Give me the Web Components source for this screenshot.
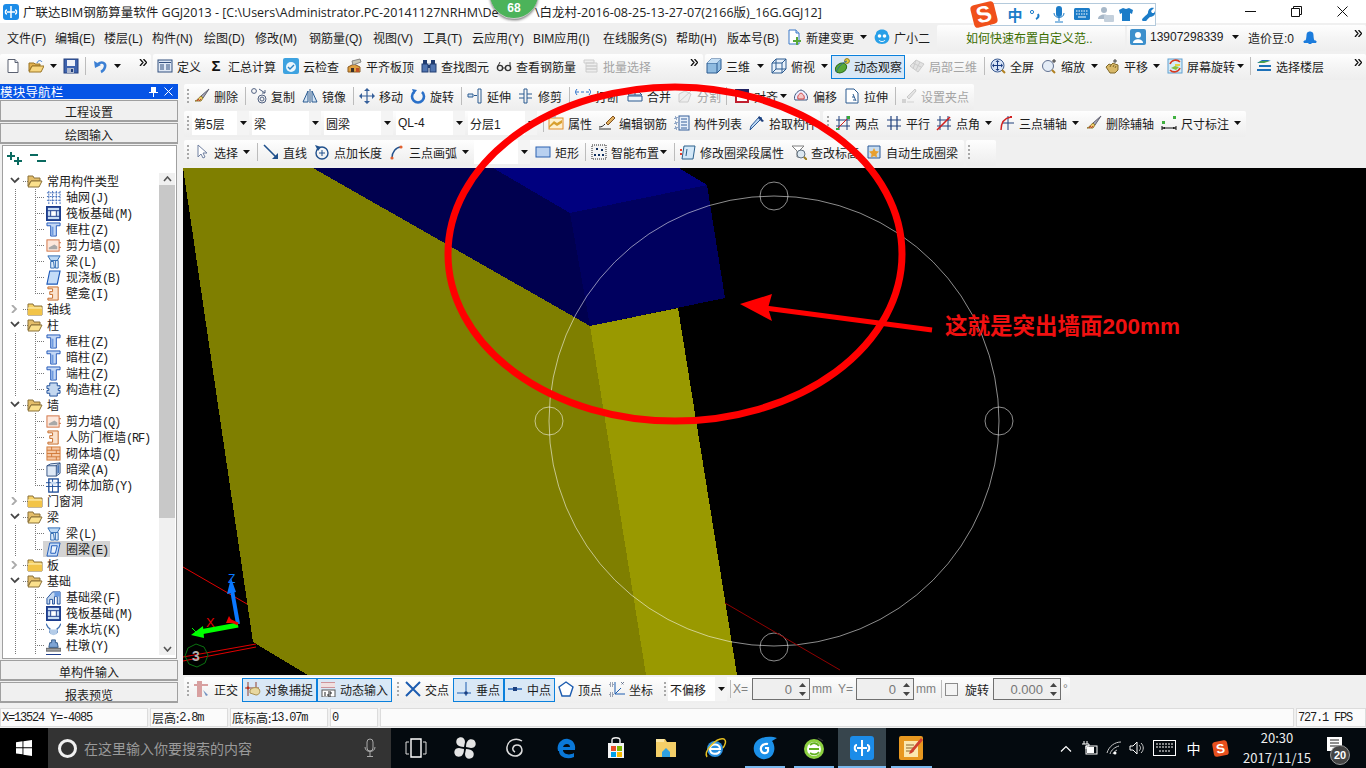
<!DOCTYPE html>
<html>
<head>
<meta charset="utf-8">
<title>GGJ2013</title>
<style>
    html, body { margin: 0; padding: 0; width: 1366px; height: 768px; overflow: hidden; background: #f0f0f0; }
    body { display: flex; flex-direction: column; position: relative; font: 12px "Liberation Sans", "Noto Sans CJK SC", sans-serif; color: #1c1c1c; }
</style>
</head>
<body>
<win-title><span class="a">广联达BIM钢筋算量软件 GGJ2013 - [C:\Users\Administrator.PC-20141127NRHM\De</span><span>\白龙村-2016-08-25-13-27-07(2166版)_16G.GGJ12]</span></win-title>
<tool-row id="menu" h="31" pt="2"></tool-row>
<tool-row id="r1" h="30"></tool-row>
<work-area>
    <nav-panel slot="left">
        <nav-button>工程设置</nav-button>
        <nav-button style="margin-top:1px;height:21px;padding-top:2px">绘图输入</nav-button>
        <nav-tree id="tree"></nav-tree>
        <nav-button style="margin-top:1px;height:21px;padding-top:3px">单构件输入</nav-button>
        <nav-button style="margin-top:1px;height:21px;padding-top:4px">报表预览</nav-button>
    </nav-panel>
    <tool-row id="r2" h="27"></tool-row>
    <tool-row id="r3" h="29"></tool-row>
    <tool-row id="r4" h="28"></tool-row>
    <cad-view></cad-view>
    <tool-row id="r5" h="32" pt="2"></tool-row>
</work-area>
<status-bar>
    <status-cell w="148" mono>X=13524 Y=-4085</status-cell>
    <status-cell w="78" mono><span class="c">层高:</span>2.8m</status-cell>
    <status-cell w="98" mono><span class="c">底标高:</span>13.07m</status-cell>
    <status-cell w="48" mono>0</status-cell>
    <status-cell w="914"></status-cell>
    <status-cell w="70" mono>727.1 FPS</status-cell>
</status-bar>
<task-bar></task-bar>
<markup-layer></markup-layer>
<update-badge>68</update-badge>
<ime-bar></ime-bar>

<script>
// small icon set, all drawn on a 16x16 box
const col = '<path d="M1 1h14v3h-4v11H5V4H1z" fill="#c4d8f5" stroke="#2055b8"/><path d="M6 5h2v9H6z" fill="#6f9be0"/>';
const ICONS = {
    new: '<path d="M3 1.5h7l3 3v10H3z" fill="#fff" stroke="#5a6070"/><path d="M10 1.5v3h3" fill="#d8deea" stroke="#5a6070"/>',
    open: '<path d="M1 13V5h5l1 1h5v2H4z" fill="#e0b050" stroke="#9a7424"/><path d="M1 14l3-6h12l-3 6z" fill="#f7d680" stroke="#9a7424"/><path d="M9 5c1-3 4-3 5-1" fill="none" stroke="#3a78c8"/>',
    save: '<rect x="1" y="1" width="14" height="14" fill="#3d62ad" stroke="#233f7c"/><rect x="4" y="2" width="8" height="6" fill="#eef1f8"/><rect x="4" y="10" width="7" height="5" fill="#aeb9cf"/><rect x="8" y="11" width="2" height="3" fill="#233f7c"/>',
    undo: '<path d="M5 6c4-3 8-1 7 3c-.5 2-2 4-4 5" fill="none" stroke="#3c80d4" stroke-width="2.6"/><path d="M1 3l1 7 6-3z" fill="#3c80d4"/>',
    def: '<rect x="1" y="2" width="14" height="12" fill="#dfe8f5" stroke="#33507f"/><rect x="2" y="4" width="12" height="1" fill="#33507f"/><path d="M3 7h4M3 9h4M3 11h4M9 7h4M9 9h4M9 11h4" stroke="#33507f"/>',
    sigma: '<text x="8" y="13" text-anchor="middle" font-size="15" font-weight="700" font-family="Liberation Sans" fill="#111">Σ</text>',
    cloud: '<rect x="0" y="0" width="16" height="16" rx="2" fill="#3da2e0"/><circle cx="8" cy="9" r="5" fill="#eaf6fd"/><path d="M5 9l2 2 4-4" fill="none" stroke="#2c84c4" stroke-width="1.4"/>',
    flat: '<path d="M2 14V9l6-3 6 3v5z" fill="#e0a040" stroke="#8a5a20"/><path d="M6 3l8-2 1 3-8 3z" fill="#c8c8b8" stroke="#888"/><rect x="5" y="10" width="3" height="4" fill="#38302a"/><rect x="10" y="10" width="3" height="4" fill="#c05028"/>',
    binoc: '<rect x="2" y="2" width="4" height="4" fill="#203c70"/><rect x="10" y="2" width="4" height="4" fill="#203c70"/><rect x="1" y="6" width="6" height="8" fill="#5074b0" stroke="#203c70"/><rect x="9" y="6" width="6" height="8" fill="#5074b0" stroke="#203c70"/><rect x="7" y="7" width="2" height="3" fill="#203c70"/>',
    glass: '<circle cx="4" cy="10" r="2.6" fill="none" stroke="#333" stroke-width="1.4"/><circle cx="12" cy="10" r="2.6" fill="none" stroke="#333" stroke-width="1.4"/><path d="M2 8l2-4M14 8V4M7 10h2" stroke="#333"/>',
    batch: '<path d="M1 2h10v3H1zM3 5h11v3H3zM3 8h11v3H3zM3 11h11v3H3z" fill="#ececec" stroke="#c0c0c0"/>',
    cube: '<path d="M1 5l4-4h10v10l-4 4H1z" fill="#8fbbe0" stroke="#2a5a90"/><path d="M1 5h10v10M11 5l4-4" fill="none" stroke="#2a5a90"/><path d="M1 5l4-4h10l-4 4z" fill="#c4def4"/>',
    wire: '<path d="M1 5l4-4h10v10l-4 4H1z" fill="#eaf2fa" stroke="#2a5a90"/><path d="M1 5h10v10M11 5l4-4M5 1v10l-4 4M5 11h10" fill="none" stroke="#2a5a90"/>',
    orbit: '<ellipse cx="7" cy="10" rx="6" ry="4.5" transform="rotate(-30 7 10)" fill="#58a838" stroke="#2c6a18"/><circle cx="13" cy="3" r="2.4" fill="#e8d040" stroke="#907818"/><path d="M2 14C6 6 10 4 13 3" stroke="#2a6a9a" fill="none"/>',
    local: '<path d="M1 8l6-6 8 4-6 8z" fill="#dcdcdc" stroke="#bdbdbd"/><path d="M4 5l8 4M7 2l-3 9M11 4l-4 8" stroke="#bdbdbd" fill="none"/>',
    full: '<circle cx="7.5" cy="7.5" r="6.5" fill="#d8e4f6" stroke="#3a5a90"/><path d="M7.5 3v9M3 7.5h9" stroke="#1c3c80"/><path d="M7.5 2l-2 2h4zM7.5 13l-2-2h4zM2 7.5l2-2v4zM13 7.5l-2-2v4z" fill="#1c3c80"/><path d="M12 12l3 3" stroke="#b08020" stroke-width="2"/>',
    zoom: '<circle cx="7" cy="8" r="5.5" fill="#e4ecf6" stroke="#607090"/><path d="M11 12l3 3" stroke="#b08020" stroke-width="2"/><path d="M13 1v4M11 3h4" stroke="#333"/>',
    pan: '<path d="M2 9l3-3 2 1 2-2 2 1 3 1v5l-3 3H6z" fill="#d8b868" stroke="#806828"/><path d="M6 9l1-2M9 9l1-2M11 10l1-2" stroke="#806828"/><path d="M11 1v4M9 3h4" stroke="#444"/>',
    turn: '<rect x="1" y="1" width="14" height="14" fill="#d4ecf8" stroke="#60a0d0"/><path d="M3 6a6 6 0 0 1 10-2" fill="none" stroke="#d83a20" stroke-width="1.6"/><path d="M13 10a6 6 0 0 1-10 2" fill="none" stroke="#d83a20" stroke-width="1.6"/><path d="M4 10l4-2 4 1-3 3z" fill="#88c040"/><path d="M8 6h5v2H8z" fill="#e8d040"/>',
    floors: '<path d="M6 2l9 0-9 3H1zM3 7h12v2H3zM1 11h14v2H1z" fill="#1c70b8"/><path d="M5 3h9L8 5H2z" fill="#48a050"/>',
    brush: '<path d="M15 1L7 8l2 2z" fill="#a8a8b8" stroke="#606070"/><path d="M7 8l2 2-2 3H1c3-1 3-3 6-5z" fill="#e8c868" stroke="#907830"/><path d="M3 13l2-2M5 13l2-2" stroke="#c84030"/>',
    copy: '<circle cx="3" cy="3" r="2.4" fill="none" stroke="#506080"/><circle cx="11" cy="11" r="4" fill="none" stroke="#506080"/><circle cx="11" cy="11" r="2" fill="none" stroke="#506080"/><path d="M8 1l6 4M14 2v3h-3" fill="none" stroke="#506080"/>',
    mirror: '<path d="M8 1v14" stroke="#2a5a90"/><path d="M6 3v11H1zM10 3v11h5z" fill="#d4e4f4" stroke="#2a5a90"/>',
    move: '<path d="M8 1v14M1 8h14" stroke="#355f9a" stroke-width="1.2"/><path d="M8 0l-3 3h6zM8 16l-3-3h6zM0 8l3-3v6zM16 8l-3-3v6z" fill="#355f9a"/>',
    rot: '<path d="M4 4a6 6 0 1 0 8 0" fill="none" stroke="#2a70c8" stroke-width="2.6"/><path d="M2 1l5 1-3 4z" fill="#2a70c8"/>',
    ext: '<path d="M14 1v14M11 1v14M11 1h3M11 15h3" stroke="#2a5a90" fill="none"/><path d="M1 6h5v3H1zM7 7.5h3" fill="#d4e4f4" stroke="#2a5a90"/>',
    trim: '<path d="M6 1v14M9 1v14M6 1h3M6 15h3" stroke="#2a5a90" fill="none"/><path d="M1 6h5M1 10h5M9 6h5M9 10h5" stroke="#2a5a90"/>',
    brk: '<path d="M1 4h14" stroke="#2a70c8" stroke-dasharray="3 2"/><path d="M2 1L0 4l2 3M14 1l2 3-2 3" stroke="#2a70c8" fill="none"/><path d="M1 13h5M10 13h5" stroke="#2a5a90" stroke-width="2"/>',
    merge: '<path d="M1 7l3-3h8l3 3zM1 8h14v5H1z" fill="#eef4fa" stroke="#2a5a90"/><path d="M8 1v6" stroke="#2a5a90"/>',
    split: '<path d="M2 14V6l6-3 6 3-3 8z" fill="#ececec" stroke="#c0c0c0"/><path d="M2 14L14 3" stroke="#c0c0c0"/>',
    align: '<rect x="1" y="1" width="14" height="4" fill="#202060"/><rect x="2" y="6" width="12" height="8" fill="#fff" stroke="#c02030" stroke-width="2"/>',
    ofs: '<path d="M2 12c-2-4 2-9 6-10 4 1 8 6 6 10z" fill="#eef" stroke="#405880"/><path d="M5 11c-1-3 1-5 3-6 2 1 4 3 3 6z" fill="#f4c8c8" stroke="#d04040"/>',
    stretch: '<path d="M2 1h8l4 4v10H2z" fill="#fff" stroke="#2a5a90"/><path d="M9 6l3 7M8 9h2M9 12h2" stroke="#2a5a90"/>',
    grip: '<path d="M14 1L6 9l2 2 7-8z" fill="#ddd" stroke="#bbb"/><rect x="1" y="11" width="4" height="4" fill="#c8c8c8"/><rect x="6" y="13" width="7" height="2" fill="#ddd"/>',
    attr: '<rect x="1" y="3" width="14" height="11" fill="#fdf0d0" stroke="#e09030"/><path d="M1 11l5-5 3 2 5-3v3l-5 3-3-2-5 4z" fill="#d8a030"/><path d="M1 1h7v2H1z" fill="#bbb"/>',
    edit: '<path d="M0 12c3 0 4-1 6-3" stroke="#222" fill="none"/><path d="M0 14h12" stroke="#333"/><path d="M14 1L7 8l2 2 7-7z" fill="#e0b060" stroke="#805020"/>',
    list: '<rect x="5" y="1" width="10" height="14" fill="#e8f0fa" stroke="#355f9a"/><path d="M7 4h6M7 7h6M7 10h6M7 13h6" stroke="#355f9a"/><path d="M1 2h2v2H1zM1 7h2v2H1zM1 12h2v2H1z" fill="none" stroke="#355f9a" stroke-dasharray="1 1"/>',
    pick: '<path d="M13 3L4 12l-3 3 1-4L10 2z" fill="#bcd8f4" stroke="#2a5a9a"/><path d="M10 1l5 5-2 1-4-4z" fill="#20407c"/>',
    two: '<path d="M4 1v14M12 1v14M1 5h14M1 11h14" stroke="#20407c"/><path d="M2 14L14 2" stroke="#d02020"/><rect x="12" y="1" width="3" height="3" fill="#38a838"/><rect x="1" y="13" width="3" height="2" fill="#38a838"/>',
    par: '<path d="M5 1v14M11 1v14M1 5h14M1 11h14" stroke="#20407c" stroke-width="1.2"/>',
    ang: '<path d="M4 1v14M12 1v14M1 5h14M1 11h14" stroke="#20407c"/><path d="M1 15L14 2" stroke="#d02020" stroke-width="1.6"/>',
    arc3: '<path d="M9 1v14M4 8h11" stroke="#20407c"/><path d="M2 15C2 7 6 3 12 2" fill="none" stroke="#d02020" stroke-width="1.4"/><rect x="11" y="1" width="2" height="2" fill="#d02020"/>',
    dim: '<rect x="1" y="6" width="3" height="3" fill="#40b040"/><rect x="12" y="1" width="3" height="3" fill="#40b040"/><path d="M1 11v4M15 11v4M1 13h14" stroke="#111"/><path d="M1 13l3-1v2zM15 13l-3-1v2z" fill="#111"/>',
    cur: '<path d="M4 1v12l3-3 2 4 2-1-2-4h4z" fill="#fff" stroke="#7080a0"/>',
    line: '<path d="M1 1l13 13" stroke="#20508c" stroke-width="1.6"/><path d="M15 15V9l-6 6z" fill="#20508c"/>',
    plen: '<circle cx="8" cy="9" r="6" fill="none" stroke="#20508c" stroke-width="1.4"/><path d="M8 6v6M5 9h6" stroke="#20508c"/><path d="M1 1l6 2-3 4z" fill="#20508c"/>',
    arc: '<path d="M3 14C3 8 7 3 12 3" fill="none" stroke="#20508c" stroke-width="1.4"/><circle cx="3" cy="14" r="1.6" fill="#e06030"/><circle cx="12" cy="3" r="1.6" fill="#e06030"/>',
    rect: '<rect x="1" y="3" width="14" height="10" fill="#b8d0f0" stroke="#2a60b0"/>',
    smart: '<rect x="1" y="1" width="14" height="14" fill="#f4f4f4" stroke="#222" stroke-dasharray="1 1"/><path d="M5 4h2v2H5zM10 5h2v2h-2zM7 10h2v2H7zM11 10h2v2h-2zM3 10h2v2H3z" fill="#103060"/>',
    mod: '<path d="M4 2h11l-2 13H2z" fill="#d4e8f8" stroke="#2a608c"/><path d="M0 5h2v2H0zM0 9h2v2H0z" fill="#e04030"/><path d="M7 5l-1 7" stroke="#2a608c"/>',
    chk: '<path d="M1 2h12l-5 5v6H6V7z" fill="#fff" stroke="#808080"/><circle cx="10" cy="10" r="4" fill="#dce8f0" stroke="#607080"/><path d="M13 13l3 3" stroke="#a08020" stroke-width="2"/>',
    auto: '<path d="M2 2h12v12H2z" fill="#c8ddf0" stroke="#2a5a9a"/><path d="M8 4l1.5 3 3.5.5-2.5 2.5.5 3.5L8 12l-3 1.5.5-3.5L3 7.5 6.5 7z" fill="#e8a030"/>',
    orth: '<path d="M0 4h14M4 1h3v15H4z" stroke="#d8a0a0" fill="#d8a0a0" stroke-width="2"/><path d="M9 9l5 5-2 1z" fill="#7090c0"/>',
    snap: '<path d="M3 1v5M11 1v5M0 7h14M3 6v9M11 6v3" stroke="#904030"/><circle cx="3" cy="7" r="1.4" fill="#c03020"/><path d="M5 9c3-3 7-3 9-1 2 3 0 6-3 6l-6-2z" fill="#e8d8a0" stroke="#a89050"/>',
    dyn: '<path d="M1 2h14M1 6h14" stroke="#c04040"/><path d="M1 2h14v4H1z" fill="#f0e0e0"/><rect x="2" y="9" width="13" height="7" fill="#fff" stroke="#555"/><path d="M5 11v4M8 11h3v2H8v2h3" stroke="#222" fill="none"/>',
    cross: '<path d="M1 1l14 14M15 1L1 15" stroke="#1c5cb0" stroke-width="2"/>',
    perp: '<path d="M10 1v14M1 12h14" stroke="#1c5cb0"/><circle cx="10" cy="12" r="1.8" fill="#1c4080"/>',
    mid: '<path d="M1 8h14" stroke="#1c5cb0" stroke-width="1.4"/><rect x="6" y="6" width="4" height="4" fill="#1c4080"/>',
    vert: '<path d="M8 1l7 5-3 9H4L1 6z" fill="#fff" stroke="#1c5cb0" stroke-width="1.4"/>',
    coord: '<path d="M6 1v12h10M6 13l6-6" stroke="#1c5cb0" fill="none"/><path d="M1 2h3v3H1zM1 12h3v3H1zM12 1l3 3M15 1l-3 3" stroke="#405070" fill="none" stroke-dasharray="1 1"/>',
    fopen: '<path d="M1 13V3h5l1 2h6v3H4z" fill="#e4be6a" stroke="#8a7038"/><path d="M1 14l3-6h11l-3 6z" fill="#fae08c" stroke="#8a7038"/>',
    fclosed: '<path d="M1 14V3h5l1 2h8v9z" fill="#f6d165" stroke="#8a7038"/><path d="M1 7h14v7H1z" fill="#f2c448"/><path d="M1 7h14" stroke="#fff3c0"/>',
    grid: '<path d="M1 2h14v13H1z" fill="none"/><path d="M3 1v14M7 1v14M11 1v14M15 1v14M1 3h15M1 7h15M1 11h15" stroke="#3a68b8" stroke-dasharray="2 1"/>',
    raft: '<rect x="1" y="1" width="14" height="14" fill="#c8dcf4" stroke="#1c3c8c" stroke-width="2"/><rect x="5" y="5" width="6" height="6" fill="#fff" stroke="#1c3c8c"/><path d="M1 5h4M11 5h4M1 11h4M11 11h4" stroke="#1c3c8c"/>',
    col: col,
    wall: '<rect x="1" y="2" width="13" height="12" fill="#fde8dc" stroke="#d07040"/><path d="M3 12h9v-3l-3-2-6 3z" fill="#a8a8a8"/><path d="M14 5h2M14 10h2" stroke="#d07040"/>',
    beam: '<path d="M2 2h13l-3 5H5z" fill="#bcd8f4" stroke="#2a68b0"/><path d="M5 8l3 0 1 7-4 0zM10 7h3l0 8h-3z" fill="#dcecfa" stroke="#2a68b0"/>',
    slab: '<path d="M4 1h11l-3 14H1z" fill="#c4dcf8" stroke="#1c58b8" stroke-width="1.2"/>',
    niche: '<path d="M2 1h11v14H2v-2h5V9H4V6h3V3H2z" fill="#fbe2cc" stroke="#c46a28"/>',
    cons: '<path d="M4 1h8v3h3v3h-2v2h2v3h-3v3H4v-3H1V9h2V7H1V4h3z" fill="#c4d8f0" stroke="#1c4c98"/>',
    brick: '<rect x="1" y="1" width="14" height="14" fill="#f6c8a4" stroke="#d07838"/><path d="M1 4.5h14M1 8h14M1 11.5h14M6 1v3.5M11 4.5V8M6 8v3.5M11 11.5V15" stroke="#d07838"/>',
    dbeam: '<path d="M1 4l4-2 10-1v11l-4 3H1z" fill="#dfe9f6" stroke="#304f80"/><path d="M11 3v12M1 4h10l4-3" fill="none" stroke="#304f80"/><path d="M12 4l2-1v8l-2 2z" fill="#4c78b8"/>',
    rebar: '<rect x="3" y="1" width="10" height="14" fill="none" stroke="#1c4c98" stroke-width="1.4"/><path d="M0 5h16M0 9h16M7 1v14" stroke="#1c4c98"/><path d="M5 4h6v3H5z" fill="#c4d8f0"/>',
    fbeam: '<path d="M1 15V9l6-7h8v13h-3V7H9v8H7v-5H4v5z" fill="#c4d8f0" stroke="#1c4c98"/><path d="M9 2h6v5H9z" fill="#6c9ce0"/>',
    pit: '<path d="M0 2c1 0 1 4 4 5v3c0 3 8 3 8 0V7c3-1 3-5 4-5" fill="none" stroke="#4070b0" stroke-width="1.4"/><path d="M3 8h10l-2 5-3 1-3-1z" fill="#b4cce8"/>',
    pier: '<path d="M6 2h4v3h2l1 5H3l1-5h2z" fill="#7ea4d4" stroke="#305888"/><rect x="0" y="11" width="16" height="3" fill="#a0a0a0" stroke="#606060"/>',
    ring: '<path d="M4 1h11l-3 14H1z" fill="#c4dcf8" stroke="#1c58b8"/><path d="M6 4h6l-2 8H5z" fill="#e8f2fc" stroke="#1c58b8"/>',
    file: '<path d="M3 1h7l3 3v11H3z" fill="#fff" stroke="#3a78c8"/><path d="M10 1v3h3" fill="#cfe0f6" stroke="#3a78c8"/><path d="M7 11h3V8h2v3h3v2h-3v3h-2v-3H7z" fill="#58a838"/>',
    bot: '<path d="M2 5c0-6 12-6 12 0 3 3 1 10-6 10S-1 8 2 5z" fill="#28a0e8"/><circle cx="5.5" cy="7" r="1.8" fill="#fff"/><circle cx="10.5" cy="7" r="1.8" fill="#fff"/><path d="M5 11c1 2 5 2 6 0" stroke="#fff" fill="none"/>',
    user: '<rect x="0" y="0" width="16" height="16" rx="2" fill="#3d90cc"/><circle cx="8" cy="6" r="3" fill="#fff"/><path d="M3 14c0-5 10-5 10 0z" fill="#fff"/>',
    bell: '<path d="M3 12c2-2 1-6 2-8 1-2 5-2 6 0 1 2 0 6 2 8z" fill="#1c7cdc"/><path d="M2 12h12v1.5H2zM6.5 14.5h3" fill="#1c7cdc" stroke="#1c7cdc"/>'
};

// helper for the plain elements that have only a fixed template
function simple(name, css, html) {
    customElements.define(name, class extends HTMLElement {
        constructor() {
            super();
            const template = document.createElement('template');
            template.innerHTML = `<style>${css}</style>${html}`;
            this.attachShadow({ mode: 'open' });
            this.shadowRoot.appendChild(template.content.cloneNode(true));
        }
    });
}

class winTitle extends HTMLElement {
    constructor() {
        super();
        this.attachShadow({ mode: 'open' }).innerHTML = `
            <style>
                :host { display: flex; align-items: center; height: 23px; background: #fff; font: 12.5px "Open Sans", "Noto Sans CJK SC", sans-serif; color: #222; flex: none; }
                .app { margin: 0 4px 0 3px; flex: none; }
                .t { white-space: nowrap; flex: 1; overflow: hidden; display: flex; }
                ::slotted(.a) { display: block; width: 512px; flex: none; overflow: hidden; }
                .b { width: 46px; height: 23px; display: flex; align-items: center; justify-content: center; flex: none; }
            </style>
            <svg class="app" width="16" height="16" viewBox="0 0 16 16"><rect width="16" height="16" rx="3" fill="#1c8ce8"/><path d="M8 2v12M4 8h8M4 6c-2 0-2 4 0 4M12 6c2 0 2 4 0 4" stroke="#fff" stroke-width="1.5" fill="none"/></svg>
            <span class="t"><slot></slot></span>
            <span class="b"><svg width="11" height="11"><path d="M0 5.5h11" stroke="#111"/></svg></span>
            <span class="b"><svg width="11" height="11"><path d="M.5 2.5h8v8h-8zM2.5 2.5v-2h8v8h-2" fill="none" stroke="#111"/></svg></span>
            <span class="b" style="width:47px"><svg width="11" height="11"><path d="M.5.5l10 10M10.5.5l-10 10" stroke="#111"/></svg></span>`;
    }
}
customElements.define('win-title', winTitle);

// one row of toolbars
class toolRow extends HTMLElement {
    connectedCallback() {
        if (this.shadowRoot) return;
        this.attachShadow({ mode: 'open' }).innerHTML = `
            <style>
                :host { display: flex; flex: none; box-sizing: border-box; height: ${this.getAttribute('h')}px; padding-top: ${this.getAttribute('pt') || 0}px; }
            </style>
            <slot></slot>`;
    }
}
customElements.define('tool-row', toolRow);

simple('tool-bar', `
    :host { display: flex; align-items: center; height: 26px; box-sizing: border-box; flex: none; background: linear-gradient(#fefefe, #f4f4f4 55%, #eeeeee); border-radius: 2px; }
    :host([flat]) { background: none; }
`, `<slot></slot>`);

class toolItem extends HTMLElement {
    connectedCallback() {
        if (this.shadowRoot) return;
        const ic = this.getAttribute('ic') || '';
        const w = this.getAttribute('w');
        let inner = '<slot></slot>';
        if (ic === '|') inner = '<span class="sep"></span>';
        else if (ic === ':') inner = '<span class="grip"></span>';
        else if (ic === 'v') inner = '<svg width="7" height="4"><path d="M0 0h7L3.5 4z" fill="#111"/></svg>';
        else if (ic === '>>') inner = '<svg class="more" width="8" height="7"><path d="M1 0l3 3.5-3 3.5M4.5 0l3 3.5-3 3.5" fill="none" stroke="#111" stroke-width="1.3"/></svg>';
        else if (ic === 'combo') inner = `<span class="combo" style="width:${this.getAttribute('bw')}px"><span class="v"><slot></slot></span><span class="a"><svg width="7" height="4"><path d="M0 0h7L3.5 4z" fill="#111"/></svg></span></span>`;
        else if (ic && ic !== '_') inner = `<svg class="i" width="16" height="16" viewBox="0 0 16 16">${ICONS[ic]}</svg><slot></slot>`;
        this.attachShadow({ mode: 'open' }).innerHTML = `
            <style>
                :host { display: flex; align-items: center; flex: none; box-sizing: border-box; width: ${w}px; height: 100%; padding-bottom: 2px; white-space: nowrap; }
                :host([off]) { color: #a4a4a4; }
                :host([off]) svg.i { opacity: .75; }
                :host([dim]) { color: #808080; }
                :host([on]) { background: #d9e8f6; border: 1px solid #0a80dc; padding-left: 2px; height: 24px; }
                .i { margin-right: 4px; flex: none; }
                .sep { width: 1px; height: 18px; background: #bcbcbc; display: block; }
                .grip { width: 2px; height: 14px; display: block; background: repeating-linear-gradient(#a8a8a8 0 2px, transparent 2px 4px); }
                .more { align-self: flex-start; margin-top: 5px; }
                .combo { display: flex; height: 24px; background: #fff; align-items: center; }
                .v { flex: 1; padding-left: 2px; overflow: hidden; }
                .a { width: 12px; height: 24px; background: #f4f4f4; display: flex; align-items: center; justify-content: center; }
            </style>${inner}`;
    }
}
customElements.define('tool-item', toolItem);

simple('work-area', `
    :host { display: flex; flex: none; height: 623px; }
    .l { width: 183px; flex: none; display: block; }
    .r { width: 1183px; flex: none; display: flex; flex-direction: column; }
`, `<div class="l"><slot name="left"></slot></div><div class="r"><slot></slot></div>`);

simple('nav-panel', `
    :host { display: flex; flex-direction: column; width: 178px; height: 621px; }
    .h { height: 15px; background: #0654e6; color: #fff; display: flex; align-items: center; font-size: 12.5px; letter-spacing: .2px; margin-bottom: 1px; flex: none; }
    .h span { flex: 1; }
    .h svg { margin-right: 6px; }
`, `<div class="h"><span>模块导航栏</span>
      <svg width="9" height="11"><path d="M2 1h5v5h2v1H5v4H4V7H0V6h2z" fill="#fff"/></svg>
      <svg width="9" height="9" style="margin-right:5px"><path d="M.5.5l8 8M8.5.5l-8 8" stroke="#fff"/></svg>
    </div><slot></slot>`);

class navButton extends HTMLElement {
    constructor() {
        super();
        this.attachShadow({ mode: 'open' }).innerHTML = `
            <style>
                :host { display: flex; align-items: center; justify-content: center; height: 22px; flex: none; box-sizing: border-box; padding-top: 1px; background: #f0f0f0; border: 1px solid #a0a0a0; border-bottom-width: 2px; }
            </style><slot></slot>`;
    }
}
customElements.define('nav-button', navButton);

simple('nav-tree', `
    :host { display: flex; flex-direction: column; height: 514px; margin-top: 1px; flex: none; box-sizing: border-box; border: 1px solid #a0a0a0; margin-left: 2px; margin-right: 1px; background: #fff; font-family: "Noto Sans CJK SC", sans-serif; }
    .tools { height: 27px; flex: none; display: flex; align-items: center; gap: 7px; padding: 0 0 3px 4px; box-sizing: border-box; }
    .body { display: flex; height: 482px; overflow: hidden; }
    .rows { flex: 1; height: 482px; overflow: hidden; }
    .bar { width: 16px; margin-right: 1px; background: #f0f0f0; display: flex; flex-direction: column; height: 482px; flex: none; }
    .up, .dn { height: 12px; display: flex; align-items: center; justify-content: center; flex: none; }
    .th { height: 333px; background: #c8c8c8; flex: none; }
    .sp { flex: 1; }
`, `<div class="tools">
      <svg width="16" height="14"><path d="M4 1v8M0 5h8M11 6v8M7 10h8" stroke="#0a6a60" stroke-width="2"/></svg>
      <svg width="16" height="14"><path d="M0 4h8M7 10h9" stroke="#0a6a60" stroke-width="2"/></svg>
    </div>
    <div class="body"><div class="rows"><slot></slot></div>
      <div class="bar"><div class="up"><svg width="9" height="6"><path d="M1 5l3.5-4 3.5 4" fill="none" stroke="#555" stroke-width="1.6"/></svg></div>
      <div class="th"></div><div class="sp"></div>
      <div class="dn"><svg width="9" height="6"><path d="M1 1l3.5 4 3.5-4" fill="none" stroke="#555" stroke-width="1.6"/></svg></div></div>
    </div>`);

class treeNode extends HTMLElement {
    connectedCallback() {
        if (this.shadowRoot) return;
        const ic = this.getAttribute('ic');
        const open = this.getAttribute('g');
        const last = this.hasAttribute('last');
        const dotV = 'repeating-linear-gradient(#777 0 1px, transparent 1px 2px)';
        const dotH = 'repeating-linear-gradient(90deg, #777 0 1px, transparent 1px 2px)';
        let css = '', inner = '';
        if (open) {
            css = `background: ${dotH} 20px 8px/5px 1px no-repeat;`;
            const chev = open === 'o'
                ? '<path d="M1 1l3.8 4L9 1" fill="none" stroke="#444" stroke-width="1.8"/>'
                : '<path d="M2 0l4 4-4 4" fill="none" stroke="#aaa" stroke-width="1.8"/>';
            inner = `<svg width="10" height="8" style="margin-left:7px;margin-right:7px">${chev}</svg>
                     <svg class="i" width="16" height="16" viewBox="0 0 16 16">${ICONS[open === 'o' ? 'fopen' : 'fclosed']}</svg>
                     <span style="margin-left:4px"><slot></slot></span>`;
        } else {
            css = `background: ${dotV} 12px 0/1px 100% no-repeat, ${dotV} 32px 0/1px ${last ? '9px' : '100%'} no-repeat, ${dotH} 32px 8px/10px 1px no-repeat; padding-left: 40px;`;
            inner = `<span class="c"><svg class="i" width="15" height="15" viewBox="0 0 16 16">${ICONS[ic]}</svg><span style="margin-left:5px"><slot></slot></span></span>`;
        }
        this.attachShadow({ mode: 'open' }).innerHTML = `
            <style>
                :host { display: flex; align-items: center; height: 16px; box-sizing: border-box; white-space: nowrap; line-height: 16px; ${css} }
                .c { display: flex; align-items: center; height: 16px; padding: 0 2px 0 3px; }
                :host([sel]) .c { background: #d4d4d4; }
                .i { flex: none; }
                ::slotted(span) { font: 12px "Liberation Mono", monospace; letter-spacing: -1.2px; }
            </style>${inner}`;
    }
}
customElements.define('tree-node', treeNode);

simple('cad-view', `
    :host { display: block; width: 1183px; height: 507px; flex: none; background: #000; overflow: hidden; position: relative; }
    svg { display: block; }
`, `<svg width="1183" height="507" viewBox="183 168 1183 507">
      <g shape-rendering="crispEdges">
        <path d="M183 168H313L590 326 646 675H308L253 642z" fill="#7f7f00"/>
        <path d="M590 326L678 308 737 675H646z" fill="#999900"/>
        <path d="M313 168H493L570 213 590 326z" fill="#00004f"/>
        <path d="M493 168H679L707 185 570 213z" fill="#00007f"/>
        <path d="M570 213L707 185 725 298 590 326z" fill="#00005f"/>
      </g>
      <g fill="none" stroke="#fff" stroke-opacity=".55">
        <circle cx="774" cy="421" r="225"/>
        <circle cx="774" cy="196" r="14"/><circle cx="549" cy="421" r="14"/>
        <circle cx="999" cy="421" r="14"/><circle cx="774" cy="647" r="14"/>
      </g>
      <g fill="none" stroke="#e00000">
        <path d="M183 567L247 604"/>
        <path d="M725 603L840 670" stroke="#900000"/>
        <path d="M183 657L256 644M183 661L256 647"/>
      </g>
      <path d="M238 624L232 590" stroke="#0a78ff" stroke-width="4"/>
      <path d="M227 594L236 592 231 578z" fill="#0a78ff"/>
      <path d="M238 625L200 632" stroke="#00ff00" stroke-width="5"/>
      <path d="M191 635L203 626 204 638z" fill="#00ff00"/>
      <path d="M238 624L229 620" stroke="#f00000" stroke-width="3"/>
      <path d="M229 616L226 623 233 623z" fill="#f00000"/>
      <path d="M192 628L198 634" stroke="#00ff00"/>
      <text x="206" y="627" font-size="13" fill="#e00000" font-family="Liberation Sans">X</text>
      <text x="228" y="583" font-size="12" fill="#0a78ff" font-family="Liberation Sans">Z</text>
      <path d="M196 644l8 3 4 8-3 8-8 4-8-3-4-8 3-8z" fill="none" stroke="#0a7010"/>
      <text x="196" y="661" font-size="14" font-weight="700" fill="#b0b0b0" text-anchor="middle" font-family="Liberation Sans">3</text>
    </svg>`);

simple('status-bar', `
    :host { display: flex; flex: none; height: 21px; box-sizing: border-box; padding-top: 1px; gap: 2px; background: #f0f0f0; }
`, `<slot></slot>`);

class statusCell extends HTMLElement {
    connectedCallback() {
        if (this.shadowRoot) return;
        this.attachShadow({ mode: 'open' }).innerHTML = `
            <style>
                :host { display: flex; align-items: center; box-sizing: border-box; height: 19px; width: ${this.getAttribute('w')}px; flex: none; background: #fbfbfb; border: 1px solid #dcdcdc; padding-left: 1px; white-space: nowrap; }
                :host([mono]) { font: 12px "Liberation Mono", monospace; letter-spacing: -1.2px; }
                ::slotted(.c) { font: 12px "Noto Sans CJK SC", sans-serif; letter-spacing: 0; }
            </style><slot></slot>`;
    }
}
customElements.define('status-cell', statusCell);

class spinBox extends HTMLElement {
    connectedCallback() {
        if (this.shadowRoot) return;
        this.attachShadow({ mode: 'open' }).innerHTML = `
            <style>
                :host { display: flex; box-sizing: border-box; height: 22px; border: 1px solid #707070; background: #efefef; color: #777; font-size: 13px; align-items: center; }
                .v { flex: 1; text-align: right; padding-right: 4px; }
                .a { width: 13px; display: flex; flex-direction: column; gap: 5px; align-items: center; }
            </style>
            <span class="v"><slot></slot></span>
            <span class="a"><svg width="7" height="4"><path d="M0 4h7L3.5 0z" fill="#444"/></svg><svg width="7" height="4"><path d="M0 0h7L3.5 4z" fill="#444"/></svg></span>`;
    }
}
customElements.define('spin-box', spinBox);

simple('check-box', `
    :host { display: block; width: 11px; height: 11px; border: 1px solid #8c8c8c; background: #f4f4f4; }
`, ``);

// task bar icons
const TASK = {
    view: '<path d="M7 3h10v18H7z" fill="none" stroke="#fff" stroke-width="1.4"/><path d="M5 6H2v12h3M19 6h3v12h-3" fill="none" stroke="#ddd"/>',
    fan: '<g fill="#e4e4e4"><path d="M11 11C4 11 2 7 4 3c3-3 8-2 8 3z"/><path d="M13 11c0-7 4-9 8-7 3 3 2 8-3 8z"/><path d="M13 13c7 0 9 4 7 8-3 3-8 2-8-3z"/><path d="M11 13c0 7-4 9-8 7-3-3-2-8 3-8z"/></g>',
    spiral: '<path d="M19 5C13 1 5 4 4 11c-1 7 7 11 12 8 5-3 3-10-2-10-4 0-6 5-2 7" fill="none" stroke="#ddd" stroke-width="1.5"/>',
    edge: '<path d="M4 15C2 7 9 2 14 3c5 1 8 5 7 11H9c0 4 6 6 11 3v4c-7 3-15 0-15-6z" fill="#0a78d8"/><path d="M9 11h7c0-4-6-4-7 0z" fill="#040a10"/>',
    store: '<path d="M4 7h16v15H4z" fill="#f4f4f4"/><path d="M8 8V4c0-3 8-3 8 0v4" fill="none" stroke="#eee" stroke-width="1.4"/><rect x="7" y="10" width="5" height="5" fill="#e84c28"/><rect x="13" y="10" width="5" height="5" fill="#7cb800"/><rect x="7" y="16" width="5" height="5" fill="#00a0e8"/><rect x="13" y="16" width="5" height="5" fill="#f8b800"/>',
    folder: '<path d="M2 3h9l2 3h9v15H2z" fill="#f4cf68"/><path d="M2 3h8v3H2z" fill="#fbe7a4"/><path d="M8 16l4-4 4 4v5H8z" fill="#30a0e0"/>',
    ie: '<circle cx="12" cy="13" r="8" fill="#2a90e0"/><path d="M7 13h10c0-6-10-6-10 0 0 6 8 6 10 2" fill="none" stroke="#fff" stroke-width="2"/><path d="M4 21C0 15 14 1 21 3c3 2 1 6-1 9" fill="none" stroke="#e8c020" stroke-width="1.4"/>',
    g: '<path d="M1 10C3 1 16-1 24 2l-5 3c4 5 3 14-3 17-8 4-17-3-15-12z" fill="#1c90e8"/><path d="M15 8c-4-1-8 2-7 6 1 4 6 4 7 1v-3h-3" fill="none" stroke="#fff" stroke-width="2.2"/>',
    ge: '<circle cx="12" cy="13" r="10" fill="#8cd040"/><circle cx="12" cy="13" r="7" fill="#fff"/><path d="M7 13h10M8 9c3-3 7-2 9 1M8 17c3 2 7 2 9-1" fill="none" stroke="#60b020" stroke-width="1.8"/><path d="M16 2l5 3" stroke="#333" stroke-width="1.4"/>',
    app: '<rect x="0" y="0" width="24" height="24" rx="3" fill="#1c8ce8"/><path d="M12 4v16M7 12h10M7 9c-3 0-3 6 0 6M17 9c3 0 3 6 0 6" stroke="#fff" stroke-width="2" fill="none"/>',
    note: '<rect x="0" y="0" width="24" height="24" rx="2" fill="#e89820"/><path d="M5 5h14v16H5z" fill="#fbe8b0"/><path d="M7 9h8M7 12h8M7 15h8" stroke="#8a6830"/><path d="M22 2L11 15l-1 3 3-1L24 4z" fill="#d04030"/>'
};

class taskIcon extends HTMLElement {
    connectedCallback() {
        if (this.shadowRoot) return;
        const ul = this.getAttribute('ul');
        this.attachShadow({ mode: 'open' }).innerHTML = `
            <style>
                :host { display: flex; align-items: center; justify-content: center; flex: none; width: ${this.getAttribute('w')}px; height: 40px; position: relative; box-sizing: border-box; }
                :host([act]) { background: #37454d; }
                i { position: absolute; left: ${ul === 'full' ? 0 : 5}px; right: ${ul === 'full' ? 0 : 4}px; bottom: 0; height: 2px; background: #7ab8ee; display: ${ul ? 'block' : 'none'}; }
            </style>
            <svg width="24" height="24" viewBox="0 0 24 24">${TASK[this.getAttribute('ic')]}</svg><i></i>`;
    }
}
customElements.define('task-icon', taskIcon);

class taskBar extends HTMLElement {
    constructor() {
        super();
        const xs = [391, 440, 490, 540, 591, 641, 690, 740, 789, 838, 886, 936];
        const list = [['view'], ['fan'], ['spiral'], ['edge'], ['store'], ['folder'], ['ie'], ['g', 'ul="in"'], ['ge', 'ul="in"'], ['app', 'ul="full" act'], ['note', 'ul="in"']];
        const icons = list.map((it, i) => `<task-icon w="${xs[i + 1] - xs[i]}" ic="${it[0]}" ${it[1] || ''}></task-icon>`).join('');
        this.attachShadow({ mode: 'open' }).innerHTML = `
            <style>
                :host { display: flex; height: 40px; flex: none; background: #040a0f; color: #fff; font-family: "Noto Sans CJK SC", sans-serif; align-items: center; }
                .start { width: 48px; height: 40px; background: #000; display: flex; align-items: center; justify-content: center; flex: none; }
                .search { width: 343px; height: 40px; background: #333; display: flex; align-items: center; flex: none; color: #9a9a9a; font-size: 14px; }
                .search .ring { width: 13px; height: 13px; border: 3px solid #f0f0f0; border-radius: 50%; margin: 0 7px 0 10px; flex: none; }
                .search span { flex: 1; white-space: nowrap; }
                .search svg { margin-right: 15px; flex: none; }
                .tray { display: flex; align-items: center; margin-left: 119px; height: 40px; }
                .t { display: flex; align-items: center; justify-content: center; flex: none; height: 40px; }
                .clock { width: 84px; text-align: center; flex-direction: column; font-size: 13px; line-height: 20px; color: #eee; gap: 0; }
                .s { width: 15px; height: 15px; background: #e8501e; border-radius: 3px; transform: rotate(-10deg); display: flex; align-items: center; justify-content: center; font: 700 13px "Liberation Sans", sans-serif; color: #fff; }
                .note { width: 47px; position: relative; }
                .badge { position: absolute; left: 11px; top: 17px; width: 20px; height: 20px; border-radius: 50%; background: #444; border: 1px solid #999; box-sizing: border-box; font: 700 11px/18px "Liberation Sans", sans-serif; text-align: center; color: #fff; }
            </style>
            <div class="start"><svg width="16" height="16"><path d="M0 2.2L6.5 1.3v6H0zM7.4 1.2L16 0v7.3H7.4zM0 8.2h6.5v6L0 13.4zM7.4 8.2H16V16l-8.6-1.2z" fill="#fff"/></svg></div>
            <div class="search"><i class="ring"></i><span>在这里输入你要搜索的内容</span>
                <svg width="12" height="20"><rect x="3" y="1" width="6" height="12" rx="3" fill="none" stroke="#aaa"/><path d="M1 9c0 6 10 6 10 0M6 14v4M3 18.5h6" fill="none" stroke="#aaa"/></svg></div>
            ${icons}
            <div class="tray">
                <div class="t" style="width:22px"><svg width="12" height="7"><path d="M1 6.5l5-5 5 5" fill="none" stroke="#fff" stroke-width="1.2"/></svg></div>
                <div class="t" style="width:25px"><svg width="16" height="14"><rect x="4" y="5" width="11" height="8" fill="none" stroke="#fff"/><rect x="5" y="6" width="7" height="6" fill="#fff"/><path d="M2 0v3M5 0v3M0 3h7v2H4v3" fill="none" stroke="#fff"/></svg></div>
                <div class="t" style="width:24px"><svg width="16" height="14"><path d="M1 12C3 5 9 1 15 1M4 13c1-4 5-7 9-8M7 13c1-2 2-3 4-4" fill="none" stroke="#c8c8c8"/><circle cx="9" cy="12" r="1.5" fill="#fff"/></svg></div>
                <div class="t" style="width:22px"><svg width="16" height="14"><path d="M1 5h3l4-4v12l-4-4H1z" fill="none" stroke="#fff"/><path d="M10 4c2 2 2 4 0 6M12 2c3 3 3 7 0 10" fill="none" stroke="#ccc"/></svg></div>
                <div class="t" style="width:33px"><svg width="23" height="16"><rect x=".5" y=".5" width="22" height="15" fill="none" stroke="#fff"/><path d="M3 4h17M3 7h17M6 11h11" stroke="#fff" stroke-dasharray="2 1"/></svg></div>
                <div class="t" style="width:25px;font-size:14px">中</div>
                <div class="t" style="width:29px"><span class="s">S</span></div>
                <div class="t clock"><span>20:30</span><span>2017/11/15</span></div>
                <div class="t note"><svg width="16" height="16" style="margin:-8px 0 0 -16px"><path d="M0 1h15v14H0z" fill="#fff"/><path d="M3 4h9M3 7h9M3 10h9" stroke="#222"/></svg><span class="badge">20</span></div>
            </div>`;
    }
}
customElements.define('task-bar', taskBar);

// the hand drawn notes on top of the picture
simple('markup-layer', `
    :host { position: absolute; left: 0; top: 0; width: 1366px; height: 768px; pointer-events: none; }
    svg { position: absolute; left: 0; top: 0; }
    .note { position: absolute; left: 945px; top: 308px; font: 700 22.5px/32px "Noto Sans CJK SC", "Liberation Sans", sans-serif; color: #f01010; white-space: nowrap; }
    .note b { font: 700 22.5px/32px "Liberation Sans", sans-serif; }
`, `<svg width="1366" height="768">
      <ellipse cx="675" cy="254" rx="227" ry="167" fill="none" stroke="#ff0000" stroke-width="7"/>
      <path d="M765 308L932 330" stroke="#ff0000" stroke-width="5"/>
      <path d="M740 304L772 294 768 308 772 321z" fill="#ff0000"/>
    </svg>
    <div class="note">这就是突出墙面<b>200mm</b></div>`);

simple('update-badge', `
    :host { position: absolute; left: 490px; top: -30px; width: 48px; border-radius: 50%; background: #4cb35a; box-shadow: 0 1px 3px #0009; color: #fff; font: 700 12px "Liberation Sans", sans-serif; display: flex; align-items: flex-end; justify-content: center; padding-bottom: 3px; box-sizing: content-box; height: 45px; border-bottom: 1px solid #ccc; }
`, `<slot></slot>`);

simple('ime-bar', `
    :host { position: absolute; left: 970px; top: 1px; height: 26px; width: 186px; display: flex; align-items: center; }
    .box { position: absolute; left: 20px; top: 2px; right: 0; bottom: 1px; background: #fff; border: 1px solid #b4cadc; box-sizing: border-box; }
    .s { position: relative; width: 24px; height: 23px; background: #f0501a; border-radius: 4px; transform: rotate(-14deg); color: #fff; font: 700 23px/23px "Liberation Sans", sans-serif; text-align: center; margin-left: 2px; flex: none; }
    .i { position: relative; display: flex; align-items: center; justify-content: center; flex: none; color: #1c7cc8; }
`, `<div class="box"></div><div class="s">S</div>
    <div class="i" style="width:20px;margin-left:9px;font:700 15px 'Noto Sans CJK SC',sans-serif">中</div>
    <div class="i" style="width:20px;margin-left:0"><svg width="12" height="12"><circle cx="3" cy="4" r="1.6" fill="none" stroke="#1c7cc8"/><path d="M9 6c1 2 0 4-2 5" fill="none" stroke="#1c7cc8" stroke-width="2"/></svg></div>
    <div class="i" style="width:22px;margin-left:3px"><svg width="12" height="17"><rect x="3" y="0" width="6" height="11" rx="3" fill="#1c7cc8"/><path d="M1 7c0 6 10 6 10 0M6 12v3M2 16h8" fill="none" stroke="#1c7cc8"/></svg></div>
    <div class="i" style="width:22px;margin-left:1px"><svg width="16" height="12"><rect width="16" height="12" rx="1.5" fill="#1c7cc8"/><path d="M2 3h12M2 6h12" stroke="#fff" stroke-dasharray="1.5 1"/><path d="M4 9h8" stroke="#fff"/></svg></div>
    <div class="i" style="width:22px;margin-left:1px"><svg width="17" height="17"><circle cx="7" cy="4" r="3" fill="#a8b8c8"/><path d="M1 13c0-6 12-6 12 0z" fill="#a8b8c8"/><rect x="7" y="9" width="10" height="7" rx="1" fill="#c4d0dc"/></svg></div>
    <div class="i" style="width:20px"><svg width="14" height="13"><path d="M0 2l4-2 3 1 3-1 4 2-1 4-2-1v8H3V5L1 6z" fill="#1c7cc8"/></svg></div>
    <div class="i" style="width:23px"><svg width="14" height="14"><path d="M1 13c0-2 5-5 6-7 0-3 2-6 6-5l-3 3 1 2 2 0 1-2c1 4-2 6-5 6-2 1-4 5-6 6z" fill="#1c7cc8"/></svg></div>`);

// x is the left edge of the item on the screen, the width of each item runs up to the next one
let rowCursor = 0;
function bar(x0, x1, items, attrs) {
    const html = items.map((it, i) => {
        const next = i + 1 < items.length ? items[i + 1][0] : x1;
        return `<tool-item w="${next - it[0]}" ic="${it[1]}" ${it[3] || ''}>${it[2] || ''}</tool-item>`;
    }).join('');
    const margin = x0 - rowCursor;
    rowCursor = x1;
    return `<tool-bar ${attrs || ''} style="margin-left:${margin}px;width:${x1 - x0}px;padding-left:${items[0][0] - x0}px">${html}</tool-bar>`;
}
function fill(id, start, parts) {
    rowCursor = start;
    document.getElementById(id).innerHTML = parts.map(p => bar(p[0], p[1], p[2], p[3])).join('');
}
const combo = (w) => `bw="${w}"`;
const green = '<span style="color:#3c6e00">如何快速布置自定义范..</span>';

fill('menu', 0, [
    [0, 937, [[7, '', '文件(F)'], [55, '', '编辑(E)'], [104, '', '楼层(L)'], [152, '', '构件(N)'], [204, '', '绘图(D)'], [255, '', '修改(M)'], [309, '', '钢筋量(Q)'], [373, '', '视图(V)'], [423, '', '工具(T)'], [472, '', '云应用(Y)'], [533, '', 'BIM应用(I)'], [603, '', '在线服务(S)'], [676, '', '帮助(H)'], [727, '', '版本号(B)'], [786, 'file', '新建变更'], [860, 'v'], [874, 'bot', '广小二']], 'flat'],
    [937, 1125, [[966, '', green]]],
    [1127, 1366, [[1130, 'user', '13907298339'], [1232, 'v'], [1248, '', '造价豆:0'], [1302, 'bell'], [1354, '>>']]]
]);
fill('r1', 0, [
    [0, 151, [[5, 'new'], [28, 'open'], [50, 'v'], [63, 'save'], [85, '|'], [93, 'undo'], [114, 'v'], [139, '>>']]],
    [153, 703, [[157, 'def', '定义'], [208, 'sigma', '汇总计算'], [283, 'cloud', '云检查'], [346, 'flat', '平齐板顶'], [421, 'binoc', '查找图元'], [496, 'glass', '查看钢筋量'], [583, 'batch', '批量选择', 'off'], [690, '>>']]],
    [705, 1366, [[706, 'cube', '三维'], [757, 'v'], [771, 'wire', '俯视'], [821, 'v'], [831, 'orbit', '动态观察', 'on'], [905, '_'], [909, 'local', '局部三维', 'off'], [984, '|'], [990, 'full', '全屏'], [1041, 'zoom', '缩放'], [1091, 'v'], [1104, 'pan', '平移'], [1153, 'v'], [1167, 'turn', '屏幕旋转'], [1237, 'v'], [1250, '|'], [1256, 'floors', '选择楼层'], [1354, '>>']]]
]);
fill('r2', 183, [
    [184, 974, [[187, ':'], [194, 'brush', '删除'], [245, '|'], [251, 'copy', '复制'], [302, 'mirror', '镜像'], [353, '|'], [359, 'move', '移动'], [410, 'rot', '旋转'], [461, '|'], [467, 'ext', '延伸'], [518, 'trim', '修剪'], [569, '|'], [575, 'brk', '打断'], [627, 'merge', '合并'], [677, 'split', '分割', 'off'], [726, '|'], [734, 'align', '对齐'], [780, 'v'], [793, 'ofs', '偏移'], [844, 'stretch', '拉伸'], [895, '|'], [901, 'grip', '设置夹点', 'off']]]
]);
fill('r3', 183, [
    [184, 820, [[187, ':'], [192, 'combo', '第5层', combo(57)], [252, 'combo', '梁', combo(69)], [324, 'combo', '圆梁', combo(69)], [396, 'combo', 'QL-4', combo(69)], [468, 'combo', '分层1', combo(69)], [543, '|'], [548, 'attr', '属性'], [599, 'edit', '编辑钢筋'], [674, 'list', '构件列表'], [749, 'pick', '拾取构件']]],
    [823, 1246, [[827, ':'], [835, 'two', '两点'], [886, 'par', '平行'], [936, 'ang', '点角'], [985, 'v'], [999, 'arc3', '三点辅轴'], [1072, 'v'], [1086, 'brush', '删除辅轴'], [1161, 'dim', '尺寸标注'], [1234, 'v']]]
]);
fill('r4', 183, [
    [184, 964, [[187, ':'], [194, 'cur', '选择'], [243, 'v'], [257, '|'], [263, 'line', '直线'], [314, 'plen', '点加长度'], [389, 'arc', '三点画弧'], [462, 'v'], [474, 'combo', '', combo(56)], [535, 'rect', '矩形'], [585, '|'], [591, 'smart', '智能布置'], [660, 'v'], [674, '|'], [680, 'mod', '修改圈梁段属性'], [791, 'chk', '查改标高'], [866, 'auto', '自动生成圈梁']]],
    [966, 996, [[968, ':']]]
]);
fill('r5', 183, [
    [184, 1070, [[187, ':'], [194, 'orth', '正交'], [242, 'snap', '对象捕捉', 'on'], [317, 'dyn', '动态输入', 'on'], [392, '_'], [397, ':'], [405, 'cross', '交点'], [453, 'perp', '垂点', 'on'], [504, 'mid', '中点', 'on'], [555, '_'], [558, 'vert', '顶点'], [609, 'coord', '坐标'], [664, ':'], [668, 'combo', '不偏移', combo(59)], [730, '|'], [733, '', 'X=', 'dim'], [752, '', '<spin-box style="width:58px">0</spin-box>'], [812, '', 'mm', 'dim'], [838, '', 'Y=', 'dim'], [856, '', '<spin-box style="width:58px">0</spin-box>'], [916, '', 'mm', 'dim'], [941, '|'], [945, '', '<check-box></check-box>'], [965, '', '旋转'], [993, '', '<spin-box style="width:68px">0.000</spin-box>'], [1063, '', '°', 'dim']]]
]);

// [folder state or icon, text, latin part, extra attribute]
const TREE = [
    ['o', '常用构件类型'], ['grid', '轴网', '(J)'], ['raft', '筏板基础', '(M)'], ['col', '框柱', '(Z)'], ['wall', '剪力墙', '(Q)'], ['beam', '梁', '(L)'], ['slab', '现浇板', '(B)'], ['niche', '壁龛', '(I)', 'last'],
    ['c', '轴线'],
    ['o', '柱'], ['col', '框柱', '(Z)'], ['col', '暗柱', '(Z)'], ['col', '端柱', '(Z)'], ['cons', '构造柱', '(Z)', 'last'],
    ['o', '墙'], ['wall', '剪力墙', '(Q)'], ['niche', '人防门框墙', '(RF)'], ['brick', '砌体墙', '(Q)'], ['dbeam', '暗梁', '(A)'], ['rebar', '砌体加筋', '(Y)', 'last'],
    ['c', '门窗洞'],
    ['o', '梁'], ['beam', '梁', '(L)'], ['ring', '圈梁', '(E)', 'last sel'],
    ['c', '板'],
    ['o', '基础'], ['fbeam', '基础梁', '(F)'], ['raft', '筏板基础', '(M)'], ['pit', '集水坑', '(K)'], ['pier', '柱墩', '(Y)'], ['raft', '']
];
document.getElementById('tree').innerHTML = TREE.map(n => {
    if (n[0] === 'o' || n[0] === 'c') return `<tree-node g="${n[0]}">${n[1]}</tree-node>`;
    return `<tree-node ic="${n[0]}" ${n[3] || ''}>${n[1]}${n[2] ? `<span>${n[2]}</span>` : ''}</tree-node>`;
}).join('');
</script>
</body>
</html>
